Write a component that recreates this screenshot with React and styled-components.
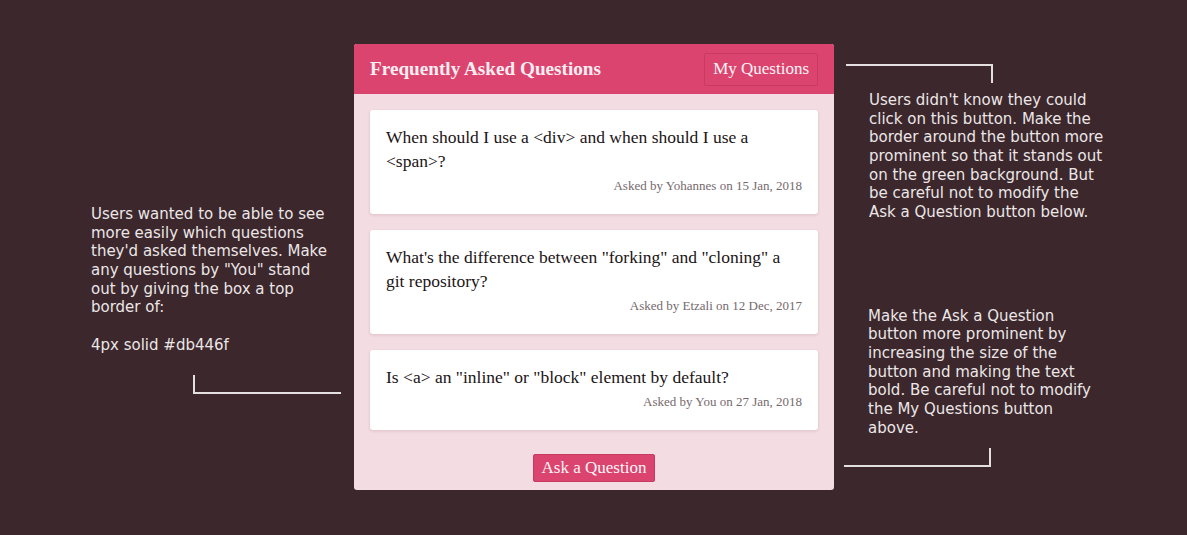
import React from "react";
import styled, { createGlobalStyle } from "styled-components";

const Global = createGlobalStyle`
  html, body { margin: 0; padding: 0; }
  body {
    background: #3b272c;
    font-family: "DejaVu Sans", sans-serif;
  }
`;

const Page = styled.div`
  width: 1187px;
  height: 535px;
  display: grid;
  grid-template-columns: 354px 480px 353px;
  box-sizing: border-box;
  padding-top: 44px;
  overflow: hidden;
`;

const SideLeft = styled.div`
  display: flex;
  flex-direction: column;
  padding: 161px 0 0 91px;
`;

const SideRight = styled.div`
  display: flex;
  flex-direction: column;
  padding-top: 20px;
`;

const Note = styled.p`
  margin: 0;
  color: #ece6e7;
  font-size: 15px;
  line-height: 18.67px;
  width: ${(p) => p.$w}px;
  margin-left: ${(p) => p.$ml || 0}px;
  margin-top: ${(p) => p.$mt || 0}px;
`;

const Connector = styled.div`
  box-sizing: border-box;
  width: ${(p) => p.$w}px;
  height: ${(p) => p.$h}px;
  margin-left: ${(p) => p.$ml}px;
  margin-top: ${(p) => p.$mt || 0}px;
  border: 0 solid #e4e0e1;
  ${(p) => p.$sides.map((s) => `border-${s}-width: 2px;`).join(" ")}
`;

const Panel = styled.div`
  height: 446px;
  background: #f3dce2;
  border-radius: 3px;
  overflow: hidden;
  display: flex;
  flex-direction: column;
  font-family: "Liberation Serif", serif;
`;

const Header = styled.header`
  height: 50px;
  background: #db446f;
  display: flex;
  align-items: center;
  justify-content: space-between;
  padding: 0 16px;
  box-sizing: border-box;
`;

const Title = styled.h1`
  margin: 0;
  font-size: 19.2px;
  font-weight: bold;
  color: #fbeef2;
`;

const GhostButton = styled.button`
  font-family: inherit;
  font-size: 17px;
  color: #fff6f8;
  background: transparent;
  border: 1px solid #c83a62;
  border-radius: 2px;
  height: 33px;
  padding: 0 8px;
  cursor: pointer;
`;

const List = styled.div`
  display: flex;
  flex-direction: column;
  gap: 16px;
  padding: 16px;
`;

const Card = styled.article`
  background: #fff;
  border-radius: 3px;
  box-shadow: 0 1px 3px rgba(120, 60, 80, 0.18);
  padding: 15px 16px 19px;
`;

const Question = styled.p`
  margin: 0;
  font-size: 17.5px;
  line-height: 24px;
  color: #1b1416;
`;

const Meta = styled.p`
  margin: 4px 0 0;
  text-align: right;
  font-size: 13px;
  line-height: 18px;
  color: #75696d;
`;

const Footer = styled.div`
  display: flex;
  justify-content: center;
  padding-top: 8px;
`;

const PrimaryButton = styled.button`
  font-family: inherit;
  font-size: 17px;
  color: #fff6f8;
  background: #db446f;
  border: 1px solid #c83a62;
  border-radius: 2px;
  height: 28px;
  padding: 0 8px;
  cursor: pointer;
`;

const questions = [
  {
    q: "When should I use a <div> and when should I use a <span>?",
    who: "Yohannes",
    date: "15 Jan, 2018",
  },
  {
    q: "What's the difference between \"forking\" and \"cloning\" a git repository?",
    who: "Etzali",
    date: "12 Dec, 2017",
  },
  {
    q: "Is <a> an \"inline\" or \"block\" element by default?",
    who: "You",
    date: "27 Jan, 2018",
  },
];

export default function App() {
  return (
    <>
      <Global />
      <Page>
        <SideLeft>
          <Note $w={242}>
            Users wanted to be able to see more easily which questions they'd
            asked themselves. Make any questions by "You" stand out by giving
            the box a top border of:
            <br />
            <br />
            4px solid #db446f
          </Note>
          <Connector $w={148} $h={19} $ml={102} $mt={21} $sides={["left", "bottom"]} />
        </SideLeft>
        <Panel>
          <Header>
            <Title>Frequently Asked Questions</Title>
            <GhostButton>My Questions</GhostButton>
          </Header>
          <List>
            {questions.map((item) => (
              <Card key={item.q}>
                <Question>{item.q}</Question>
                <Meta>
                  Asked by {item.who} on {item.date}
                </Meta>
              </Card>
            ))}
          </List>
          <Footer>
            <PrimaryButton>Ask a Question</PrimaryButton>
          </Footer>
        </Panel>
        <SideRight>
          <Connector $w={147} $h={19} $ml={12} $sides={["top", "right"]} />
          <Note $w={237} $ml={35} $mt={8}>
            Users didn't know they could click on this button. Make the border
            around the button more prominent so that it stands out on the green
            background. But be careful not to modify the Ask a Question button
            below.
          </Note>
          <Note $w={230} $ml={34} $mt={85}>
            Make the Ask a Question button more prominent by increasing the
            size of the button and making the text bold. Be careful not to
            modify the My Questions button above.
          </Note>
          <Connector $w={147} $h={19} $ml={10} $mt={11} $sides={["right", "bottom"]} />
        </SideRight>
      </Page>
    </>
  );
}
